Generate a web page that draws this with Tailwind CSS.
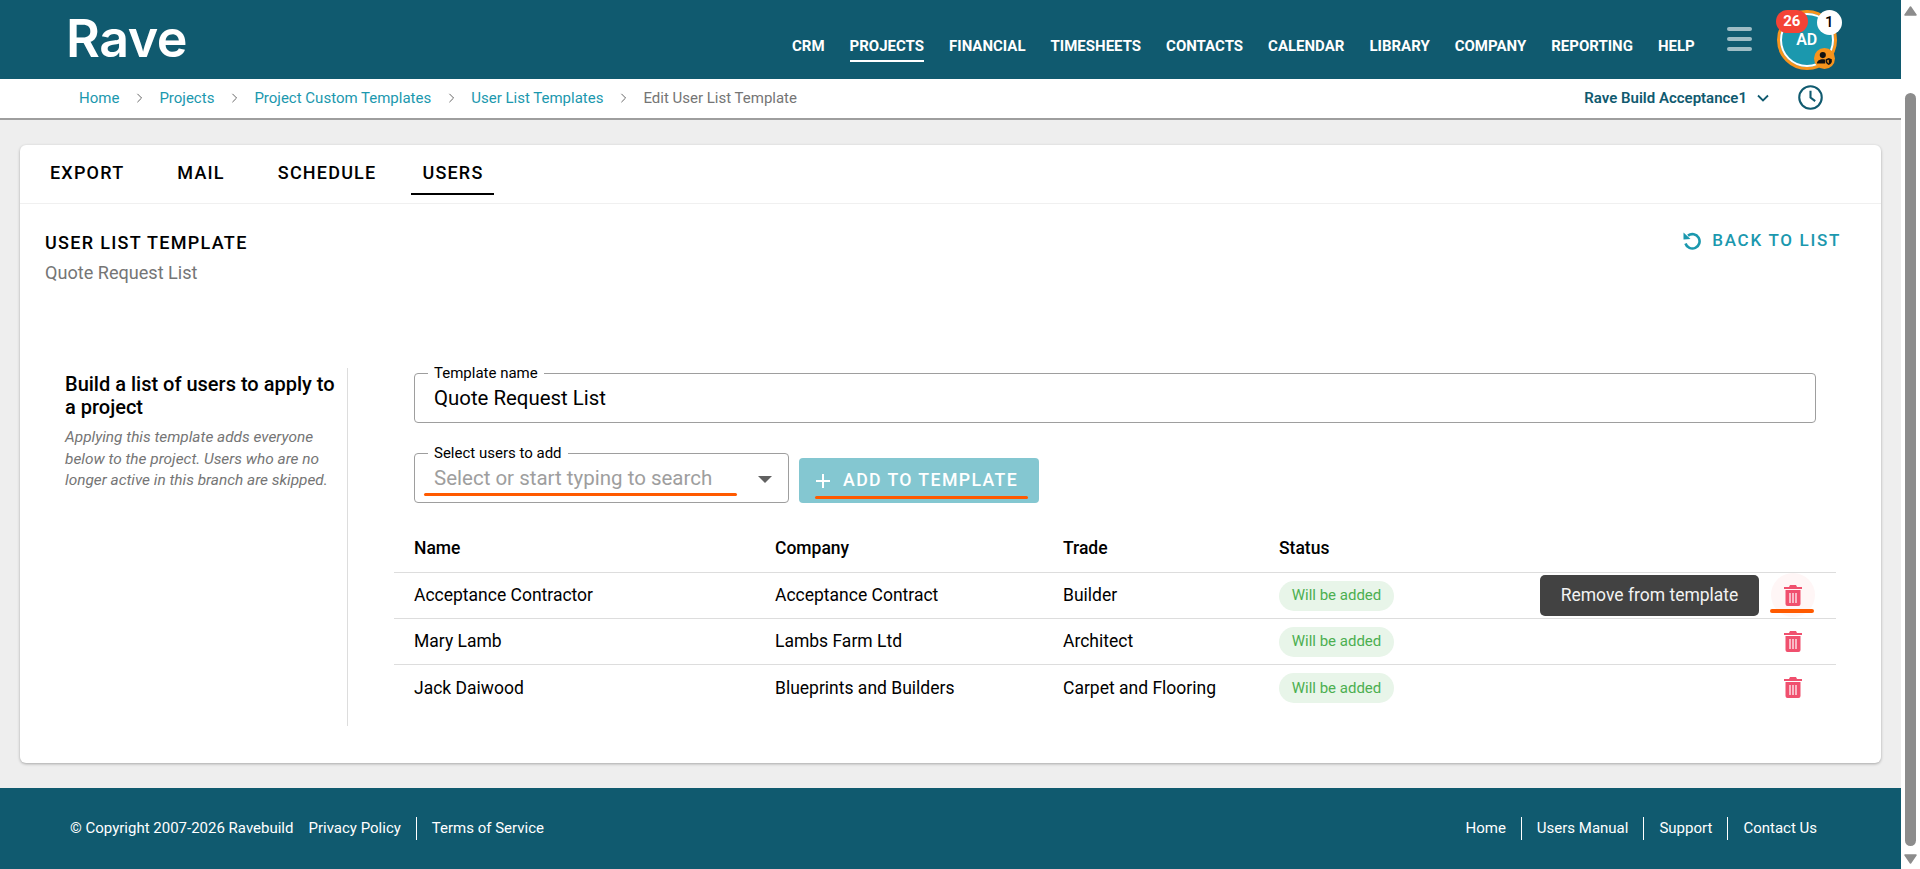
<!DOCTYPE html>
<html lang="en">
<head>
<meta charset="utf-8">
<title>Edit User List Template</title>
<script src="https://cdn.jsdelivr.net/npm/@tailwindcss/browser@4"></script>
</head>
<body class="h-[869px] overflow-hidden flex bg-white font-['Roboto',sans-serif] text-black">
<main class="w-[1901px] h-[869px] shrink-0 flex flex-col bg-[#eeeeee]">
  <header class="h-[79px] shrink-0 bg-[#105a6f] flex items-center pl-[66px] text-white">
    <div class="font-['Inter',sans-serif] font-semibold text-[52px] leading-none tracking-[-0.5px] w-[726px] -mt-[2px]">Rave</div>
    <nav class="flex gap-[25px] text-[15px] font-bold leading-[20px] mt-[24px] h-[32px]">
      <a>CRM</a>
      <a class="h-[26px] border-b-2 border-white">PROJECTS</a>
      <a>FINANCIAL</a><a>TIMESHEETS</a><a>CONTACTS</a><a>CALENDAR</a><a>LIBRARY</a><a>COMPANY</a><a>REPORTING</a><a>HELP</a>
    </nav>
    <div class="ml-[32px] w-[25px] flex flex-col gap-[6px] -mt-[1px]">
      <span class="h-[4px] rounded-full bg-white/60"></span>
      <span class="h-[4px] rounded-full bg-white/60"></span>
      <span class="h-[4px] rounded-full bg-white/60"></span>
    </div>
    <div class="relative ml-[25px] w-[60px] h-[60px] rounded-full bg-[#1b98ae] border-[3px] border-[#f7941d] outline-2 -outline-offset-[5px] outline-white flex items-center justify-center text-[16px] font-semibold">
      AD
      <span class="absolute -left-[4px] -top-[3px] w-[32px] h-[23px] rounded-full bg-[#f44336] text-[15px] font-bold flex items-center justify-center">26</span>
      <span class="absolute left-[37px] -top-[3px] w-[25px] h-[25px] rounded-full bg-white text-black text-[15px] font-medium flex items-center justify-center">1</span>
      <span class="absolute left-[34px] top-[35px] w-[21px] h-[21px] rounded-full bg-[#f7941d] flex items-center justify-center">
        <svg viewBox="0 0 20 20" class="w-[17px] h-[17px]" fill="#111"><circle cx="8" cy="6" r="3.6"/><path d="M1 16c0-3.2 3.4-5 7-5 1 0 2 .1 2.8.4V16z"/><path d="M15 9.5l3.6 1.3v2.4c0 2.2-1.5 3.6-3.6 4.3-2.100-.7-3.600-2.100-3.600-4.300v-2.400z"/><path d="M15 11.500v4.300c-1-.5-1.800-1.300-1.800-2.600v-1z" fill="#f7941d"/></svg>
      </span>
    </div>
  </header>

  <div class="h-[41px] shrink-0 bg-white border-b-2 border-[#9e9e9e] flex items-center pl-[79px] pr-[78px] text-[15px] leading-[20px] pb-[2px]">
    <a class="text-[#1b98ae]">Home</a>
    <svg viewBox="0 0 8 12" class="w-[7px] h-[10px] mx-[16.500px]" fill="none" stroke="#666" stroke-width="1.200"><path d="M1.500 1l5 5-5 5"/></svg>
    <a class="text-[#1b98ae]">Projects</a>
    <svg viewBox="0 0 8 12" class="w-[7px] h-[10px] mx-[16.500px]" fill="none" stroke="#666" stroke-width="1.200"><path d="M1.500 1l5 5-5 5"/></svg>
    <a class="text-[#1b98ae]">Project Custom Templates</a>
    <svg viewBox="0 0 8 12" class="w-[7px] h-[10px] mx-[16.500px]" fill="none" stroke="#666" stroke-width="1.200"><path d="M1.500 1l5 5-5 5"/></svg>
    <a class="text-[#1b98ae]">User List Templates</a>
    <svg viewBox="0 0 8 12" class="w-[7px] h-[10px] mx-[16.500px]" fill="none" stroke="#666" stroke-width="1.200"><path d="M1.500 1l5 5-5 5"/></svg>
    <span class="text-[#757575]">Edit User List Template</span>
    <div class="ml-auto flex items-center text-[#105a6f] font-semibold">
      <span>Rave Build Acceptance1</span>
      <svg viewBox="0 0 12 8" class="w-[12px] h-[8px] ml-[10px]" fill="none" stroke="#105a6f" stroke-width="1.800"><path d="M1 1.500l5 5 5-5"/></svg>
      <svg viewBox="0 0 24 24" class="w-[25px] h-[25px] ml-[29px]" fill="none" stroke="#105a6f" stroke-width="2"><circle cx="12" cy="12" r="10.800"/><path d="M12 5.500V12l4.500 3.500"/></svg>
    </div>
  </div>

  <section class="mx-[20px] mt-[25px] h-[618px] shrink-0 bg-white rounded-[6px] shadow-[0_1px_3px_rgba(0,0,0,0.3)]">
    <div class="h-[59px] border-b border-[#f0f0f0] pl-[21px] flex items-start gap-[22px] text-[18px] font-medium tracking-[1.2px] leading-[20px]">
      <a class="px-[9px] h-[50px] pt-[18px]">EXPORT</a>
      <a class="px-[9px] h-[50px] pt-[18px] ml-[13px]">MAIL</a>
      <a class="px-[9px] h-[50px] pt-[18px] ml-[13px]">SCHEDULE</a>
      <a class="px-[11px] h-[50px] pt-[18px] ml-[4px] border-b-2 border-black">USERS</a>
    </div>
    <div class="flex justify-between pl-[25px] pr-[40px] pt-[28px]">
      <div>
        <div class="text-[18px] font-medium tracking-[1.300px] leading-[22px]">USER LIST TEMPLATE</div>
        <div class="text-[18.100px] text-[#757575] leading-[20px] mt-[9px]">Quote Request List</div>
      </div>
      <a class="flex items-center h-[20px] -mt-[1px] text-[#1b98ae] text-[17px] font-medium tracking-[1.7px]">
        <svg viewBox="0 0 20 18" class="w-[20px] h-[18px] mr-[9px]" fill="#1b98ae"><path d="M5 3.600A7.200 7.200 0 1 1 2.500 11.500" fill="none" stroke="#1b98ae" stroke-width="2.600"/><path d="M0.500 0.500V7.500L7.500 7z"/></svg>
        BACK TO LIST
      </a>
    </div>
    <div class="flex mt-[85px] pl-[45px]">
      <aside class="w-[283px] h-[358px] border-r border-[#dddddd] pr-[8px] pt-[5px]">
        <h2 class="text-[20px] font-medium leading-[22.500px]">Build a list of users to apply to a project</h2>
        <p class="mt-[9px] text-[15.400px] italic text-[#757575] leading-[21.500px]">Applying this template adds everyone below to the project. Users who are no longer active in this branch are skipped.</p>
      </aside>
      <div class="w-[1492px] pl-[66px] pt-[5px]">
        <div class="relative w-[1402px] h-[50px] border border-[#9e9e9e] rounded-[4px] flex items-center pl-[19px] text-[20.400px] leading-[24px]">
          <span class="absolute left-[13px] -top-[10px] bg-white px-[6px] text-[15px] leading-[18px]">Template name</span>
          Quote Request List
        </div>
        <div class="flex items-end mt-[30px] gap-[10px]">
          <div class="relative w-[375px] h-[50px] border border-[#9e9e9e] rounded-[4px] flex items-center pl-[19px] text-[20.500px] leading-[24px] text-[#9e9e9e]">
            <span class="absolute left-[13px] -top-[10px] bg-white px-[6px] text-[15px] leading-[18px] text-black">Select users to add</span>
            Select or start typing to search
            <span class="absolute right-[16px] top-[22px] w-0 h-0 border-x-[7px] border-x-transparent border-t-[7px] border-t-[#616161]"></span>
            <span class="absolute left-[9px] top-[39px] w-[313px] h-[3px] rounded-full bg-[#ff5a00]"></span>
          </div>
          <button class="relative w-[240px] h-[45px] rounded-[4px] bg-[#84c7d1] text-white text-[17.700px] font-medium tracking-[1.4px] flex items-center pl-[16px]">
            <svg viewBox="0 0 16 16" class="w-[16px] h-[16px] mr-[12px]" fill="none" stroke="white" stroke-width="2"><path d="M8 1v14M1 8h14"/></svg>
            ADD TO TEMPLATE
            <span class="absolute left-[16px] top-[38px] w-[213px] h-[3px] rounded-full bg-[#ff5a00]"></span>
          </button>
        </div>
        <div class="-ml-[20px] w-[1442px] mt-[22px] text-[17.500px]">
          <div class="grid grid-cols-[361px_288px_216px_1fr] pl-[20px] h-[48px] pb-[2px] items-center font-medium border-b border-[#dddddd] leading-[20px]">
            <span>Name</span><span>Company</span><span>Trade</span><span>Status</span>
          </div>
          <div class="relative grid grid-cols-[361px_288px_216px_1fr] pl-[20px] h-[46px] items-center border-b border-[#dddddd]">
            <span>Acceptance Contractor</span><span>Acceptance Contract</span><span>Builder</span>
            <span class="w-[115px] h-[30px] rounded-full bg-[#e8f5e9] text-[#4caf50] text-[15px] flex items-center justify-center">Will be added</span>
            <span class="absolute left-[1146px] top-[2px] w-[219px] h-[41px] rounded-[5px] bg-[#424242] text-[#f2f2f2] flex items-center justify-center">Remove from template</span>
            <span class="absolute left-[1377px] top-[0px] w-[44px] h-[44px] rounded-full bg-[#fff6f6] flex items-center justify-center">
              <svg viewBox="0 0 18 21" class="w-[18px] h-[21px]"><path fill="#f0506e" d="M6 0h6l1 2h5v2H0V2h5zM1.500 5h15v14a2 2 0 0 1-2 2H3.500a2 2 0 0 1-2-2z"/><path stroke="#fff" stroke-width="1.200" d="M6 8v10M9 8v10M12 8v10"/></svg>
            </span>
            <span class="absolute left-[1376px] top-[36px] w-[44px] h-[4px] rounded-full bg-[#ff5a00]"></span>
          </div>
          <div class="relative grid grid-cols-[361px_288px_216px_1fr] pl-[20px] h-[46px] items-center border-b border-[#dddddd]">
            <span>Mary Lamb</span><span>Lambs Farm Ltd</span><span>Architect</span>
            <span class="w-[115px] h-[30px] rounded-full bg-[#e8f5e9] text-[#4caf50] text-[15px] flex items-center justify-center">Will be added</span>
            <span class="absolute left-[1377px] top-[0px] w-[44px] h-[44px] flex items-center justify-center">
              <svg viewBox="0 0 18 21" class="w-[18px] h-[21px]"><path fill="#f0506e" d="M6 0h6l1 2h5v2H0V2h5zM1.500 5h15v14a2 2 0 0 1-2 2H3.500a2 2 0 0 1-2-2z"/><path stroke="#fff" stroke-width="1.200" d="M6 8v10M9 8v10M12 8v10"/></svg>
            </span>
          </div>
          <div class="relative grid grid-cols-[361px_288px_216px_1fr] pl-[20px] h-[46px] items-center">
            <span>Jack Daiwood</span><span>Blueprints and Builders</span><span>Carpet and Flooring</span>
            <span class="w-[115px] h-[30px] rounded-full bg-[#e8f5e9] text-[#4caf50] text-[15px] flex items-center justify-center">Will be added</span>
            <span class="absolute left-[1377px] top-[0px] w-[44px] h-[44px] flex items-center justify-center">
              <svg viewBox="0 0 18 21" class="w-[18px] h-[21px]"><path fill="#f0506e" d="M6 0h6l1 2h5v2H0V2h5zM1.500 5h15v14a2 2 0 0 1-2 2H3.500a2 2 0 0 1-2-2z"/><path stroke="#fff" stroke-width="1.200" d="M6 8v10M9 8v10M12 8v10"/></svg>
            </span>
          </div>
        </div>
      </div>
    </div>
  </section>

  <footer class="mt-[25px] flex-1 bg-[#105a6f] text-white text-[15px] flex items-center justify-between pl-[70px] pr-[84px]">
    <div class="flex items-center">
      <span>© Copyright 2007-2026 Ravebuild</span>
      <a class="ml-[15px] pr-[15px] border-r border-white">Privacy Policy</a>
      <a class="pl-[15px]">Terms of Service</a>
    </div>
    <div class="flex items-center">
      <a class="pr-[15px] border-r border-white">Home</a>
      <a class="px-[15px] border-r border-white">Users Manual</a>
      <a class="px-[15px] border-r border-white">Support</a>
      <a class="pl-[15px]">Contact Us</a>
    </div>
  </footer>
</main>
<div class="w-[19px] h-[869px] shrink-0 bg-white flex flex-col items-start">
  <svg viewBox="0 0 13 10" class="mt-[6px] ml-[3px] w-[13px] h-[10px]" fill="#8c8c8c" stroke="#8c8c8c" stroke-width="1.500" stroke-linejoin="round"><path d="M6.500 1L12 9H1z"/></svg>
  <span class="mt-[77px] ml-[4px] w-[11px] h-[753px] rounded-full bg-[#8c8c8c]"></span>
  <svg viewBox="0 0 13 10" class="mt-[8px] ml-[3px] w-[13px] h-[10px]" fill="#8c8c8c" stroke="#8c8c8c" stroke-width="1.500" stroke-linejoin="round"><path d="M6.500 9L12 1H1z"/></svg>
</div>
</body>
</html>
